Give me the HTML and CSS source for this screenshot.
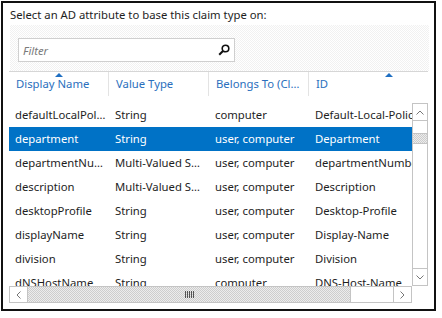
FILE: index.html
```html
<!DOCTYPE html>
<html lang="en">
<head>
  <meta charset="UTF-8" />
  <title>Select AD attribute</title>
  <link rel="stylesheet" href="styles.css">
</head>
<body>

  <div class="dialog">
    <p class="prompt">Select an AD attribute to base this claim type on:</p>

    <div class="filter-bar">
      <div class="filter">
        <span class="filter-text">Filter</span>
        <svg class="search-icon" width="12" height="12" viewBox="0 0 12 12">
          <circle cx="7.5" cy="4.5" r="3.3" fill="none" stroke="#111" stroke-width="1.6"/>
          <line x1="5.2" y1="6.8" x2="1.2" y2="10.8" stroke="#111" stroke-width="2"/>
        </svg>
      </div>
    </div>

    <div class="grid-head">
      <div class="head-cell">Display Name<span class="sort"></span></div>
      <div class="head-cell">Value Type</div>
      <div class="head-cell">Belongs To (Cl…</div>
      <div class="head-cell wide">ID<span class="sort"></span></div>
    </div>

    <div class="grid-body">
      <div class="rows-wrap">
        <div class="rows">
          <div class="row"><span class="cell">defaultLocalPol…</span><span class="cell">String</span><span class="cell">computer</span><span class="cell id">Default-Local-Policy</span></div>
          <div class="row selected"><span class="cell">department</span><span class="cell">String</span><span class="cell">user, computer</span><span class="cell id">Department</span></div>
          <div class="row"><span class="cell">departmentNu…</span><span class="cell">Multi-Valued S…</span><span class="cell">user, computer</span><span class="cell id">departmentNumber</span></div>
          <div class="row"><span class="cell">description</span><span class="cell">Multi-Valued S…</span><span class="cell">user, computer</span><span class="cell id">Description</span></div>
          <div class="row"><span class="cell">desktopProfile</span><span class="cell">String</span><span class="cell">user, computer</span><span class="cell id">Desktop-Profile</span></div>
          <div class="row"><span class="cell">displayName</span><span class="cell">String</span><span class="cell">user, computer</span><span class="cell id">Display-Name</span></div>
          <div class="row"><span class="cell">division</span><span class="cell">String</span><span class="cell">user, computer</span><span class="cell id">Division</span></div>
          <div class="row"><span class="cell">dNSHostName</span><span class="cell">String</span><span class="cell">computer</span><span class="cell id">DNS-Host-Name</span></div>
        </div>

        <div class="vscroll">
          <div class="sb-btn up">
            <svg width="8" height="5" viewBox="0 0 8 5"><polyline points="0.5,4.5 4,1 7.5,4.5" fill="none" stroke="#777" stroke-width="1"/></svg>
          </div>
          <div class="v-track">
            <div class="v-thumb"></div>
          </div>
          <div class="sb-btn down">
            <svg width="8" height="5" viewBox="0 0 8 5"><polyline points="0.5,0.5 4,4 7.5,0.5" fill="none" stroke="#777" stroke-width="1"/></svg>
          </div>
        </div>
      </div>

      <div class="hscroll-wrap">
        <div class="hscroll">
          <div class="sb-btn left">
            <svg width="5" height="8" viewBox="0 0 5 8"><polyline points="4.5,0.5 1,4 4.5,7.5" fill="none" stroke="#777" stroke-width="1"/></svg>
          </div>
          <div class="h-thumb"><span class="grip"></span></div>
          <div class="h-track"></div>
          <div class="sb-btn right">
            <svg width="5" height="8" viewBox="0 0 5 8"><polyline points="0.5,0.5 4,4 0.5,7.5" fill="none" stroke="#777" stroke-width="1"/></svg>
          </div>
        </div>
        <div class="corner"></div>
      </div>
    </div>
  </div>

</body>
</html>
```

FILE: styles.css
```css
body {
  margin: 0;
  background: #fff;
  font-family: "Noto Sans", "Open Sans", sans-serif;
  font-size: 11.3px;
  color: #1e1e1e;
}
.dialog {
  margin: 1px 0 0 1px;
  width: 431px;
  height: 306px;
  border: 2px solid #111;
  overflow: hidden;
}
.prompt {
  margin: 4px 0 0 7px;
  line-height: 16px;
  white-space: nowrap;
}
.filter-bar {
  margin: 2px 0 0 7px;
  width: 419px;
  height: 46px;
  box-sizing: border-box;
  padding: 13px 0 0 8px;
  background-image: repeating-conic-gradient(#f1f1f1 0 25%, #fff 0 50%);
  background-size: 2px 2px;
}
.filter {
  width: 217px;
  height: 24px;
  box-sizing: border-box;
  border: 1px solid #cfcfcf;
  background: #fff;
  display: flex;
  align-items: center;
  justify-content: space-between;
  padding: 0 4px 0 4px;
}
.filter-text {
  font-style: italic;
  color: #7a7a7a;
}
.search-icon {
  display: block;
}
.grid-head {
  margin-left: 6px;
  width: 419px;
  height: 24px;
  border-top: 1px solid #d6d6d6;
  display: flex;
  overflow: hidden;
  margin-bottom: 7px;
}
.head-cell {
  position: relative;
  flex: none;
  width: 100px;
  box-sizing: border-box;
  padding-left: 7px;
  line-height: 24px;
  color: #2b6fbd;
  border-right: 1px solid #e3e3e3;
  white-space: nowrap;
}
.head-cell.wide {
  width: 160px;
  border-right: none;
}
.sort {
  position: absolute;
  top: 1px;
  left: 50%;
  margin-left: -4px;
  width: 0;
  height: 0;
  border-left: 4px solid transparent;
  border-right: 4px solid transparent;
  border-bottom: 4px solid #1f6fc2;
}
.grid-body {
  margin-left: 6px;
  width: 419px;
}
.rows-wrap {
  display: flex;
  height: 183px;
}
.rows {
  flex: 1;
  overflow: hidden;
}
.row {
  display: flex;
  height: 24px;
  line-height: 24px;
  white-space: nowrap;
}
.row.selected {
  background: #0072c6;
  color: #fff;
}
.cell {
  flex: none;
  width: 100px;
  box-sizing: border-box;
  padding-left: 6px;
  overflow: hidden;
}
.cell.id {
  width: 160px;
}
.vscroll {
  width: 16px;
  box-sizing: border-box;
  border: 1px solid #c4c4c4;
  display: flex;
  flex-direction: column;
}
.sb-btn {
  display: flex;
  align-items: center;
  justify-content: center;
  background: #fff;
}
.sb-btn svg {
  display: block;
}
.sb-btn.up {
  height: 16px;
  border-bottom: 1px solid #c4c4c4;
}
.sb-btn.down {
  height: 16px;
  border-top: 1px solid #c4c4c4;
}
.v-track {
  flex: 1;
  padding-top: 12px;
}
.v-thumb {
  height: 9px;
  border-top: 1px solid #c4c4c4;
  border-bottom: 1px solid #c4c4c4;
  background-image: repeating-conic-gradient(#cdcdcd 0 25%, #ececec 0 50%);
  background-size: 2px 2px;
}
.hscroll-wrap {
  display: flex;
  height: 17px;
}
.hscroll {
  flex: 1;
  display: flex;
  box-sizing: border-box;
  border: 1px solid #c4c4c4;
}
.sb-btn.left {
  width: 17px;
  border-right: 1px solid #c4c4c4;
}
.sb-btn.right {
  width: 17px;
  border-left: 1px solid #c4c4c4;
}
.h-thumb {
  width: 322px;
  border-right: 1px solid #c4c4c4;
  background-image: repeating-conic-gradient(#cdcdcd 0 25%, #ececec 0 50%);
  background-size: 2px 2px;
  display: flex;
  align-items: center;
  justify-content: center;
}
.grip {
  width: 9px;
  height: 7px;
  background-image: repeating-linear-gradient(90deg, #555 0 1px, transparent 1px 2px);
}
.h-track {
  flex: 1;
}
.corner {
  width: 16px;
}
```
